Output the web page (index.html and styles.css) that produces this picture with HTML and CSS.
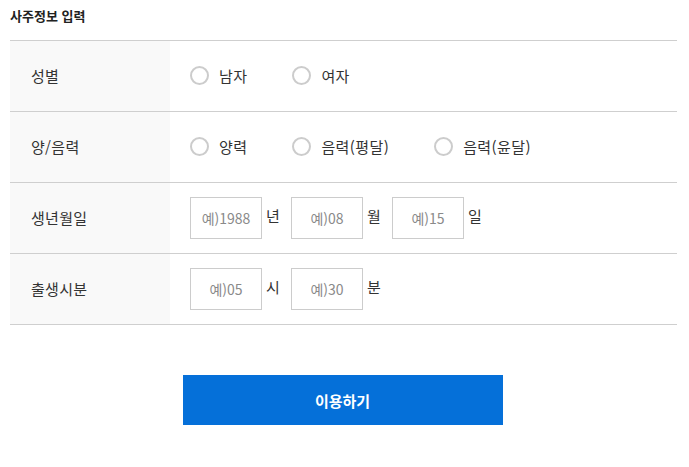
FILE: index.html
```html
<!DOCTYPE html>
<html lang="ko">
<head>
<meta charset="utf-8">
<link rel="stylesheet" href="styles.css">
</head>
<body>
<div class="wrap">
  <h2 class="title">사주정보 입력</h2>
  <div class="table">
    <div class="row">
      <div class="label">성별</div>
      <div class="field">
        <label class="radio"><span class="circle"></span>남자</label>
        <label class="radio"><span class="circle"></span>여자</label>
      </div>
    </div>
    <div class="row">
      <div class="label">양/음력</div>
      <div class="field">
        <label class="radio"><span class="circle"></span>양력</label>
        <label class="radio"><span class="circle"></span>음력(평달)</label>
        <label class="radio"><span class="circle"></span>음력(윤달)</label>
      </div>
    </div>
    <div class="row">
      <div class="label">생년월일</div>
      <div class="field">
        <span class="group"><input class="box" placeholder="예)1988"><span class="unit">년</span></span>
        <span class="group"><input class="box" placeholder="예)08"><span class="unit">월</span></span>
        <span class="group"><input class="box" placeholder="예)15"><span class="unit">일</span></span>
      </div>
    </div>
    <div class="row">
      <div class="label">출생시분</div>
      <div class="field">
        <span class="group"><input class="box" placeholder="예)05"><span class="unit">시</span></span>
        <span class="group"><input class="box" placeholder="예)30"><span class="unit">분</span></span>
      </div>
    </div>
  </div>
  <div class="actions">
    <button class="submit">이용하기</button>
  </div>
</div>
</body>
</html>
```
FILE: styles.css
```css
* { box-sizing: border-box; }
body {
  margin: 0;
  font-family: "Noto Sans CJK KR", "Noto Sans", sans-serif;
  color: #333;
  background: #fff;
}
.wrap { padding: 0 12px 0 10px; }
.title {
  margin: 0;
  padding-top: 6px;
  height: 40px;
  font-size: 13px;
  font-weight: 700;
  color: #222;
  line-height: 20px;
}
.table { border-top: 1px solid #cfcfcf; }
.row {
  display: grid;
  grid-template-columns: 160px 1fr;
  height: 71px;
  border-bottom: 1px solid #cfcfcf;
}
.label {
  background: #f9f9f9;
  display: flex;
  align-items: center;
  padding-left: 21px;
  padding-bottom: 2px;
  font-size: 15px;
  letter-spacing: 0.3px;
  color: #333;
}
.field {
  display: flex;
  align-items: center;
  padding-left: 20px;
  gap: 45px;
  font-size: 15px;
  letter-spacing: 0.4px;
  color: #333;
}
.radio {
  display: flex;
  align-items: center;
  gap: 10px;
}
.radio-text { position: relative; top: -1px; }
.circle {
  width: 19px;
  height: 19px;
  border: 2px solid #cccccc;
  border-radius: 50%;
  background: #fff;
}
.field:has(.radio) { padding-bottom: 2px; }
.field:has(.group) { gap: 8px; letter-spacing: 0; }
.group { display: flex; align-items: center; }
.box {
  width: 72px;
  height: 42px;
  border: 1px solid #cccccc;
  padding: 0;
  text-align: center;
  font-family: "Noto Sans CJK KR", "Noto Sans", sans-serif;
  font-size: 14px;
  color: #333;
}
.box::placeholder { color: #8a8a8a; }
.unit {
  margin-left: 4px;
  font-size: 15px;
  position: relative;
  top: -3px;
  min-width: 17px;
}
.actions {
  display: flex;
  justify-content: center;
  padding-top: 50px;
}
.submit {
  width: 320px;
  height: 50px;
  border: 0;
  background: #0570d9;
  color: #fff;
  font-family: "Noto Sans CJK KR", "Noto Sans", sans-serif;
  font-size: 15px;
  font-weight: 700;
  margin-left: -2px;
}
```
